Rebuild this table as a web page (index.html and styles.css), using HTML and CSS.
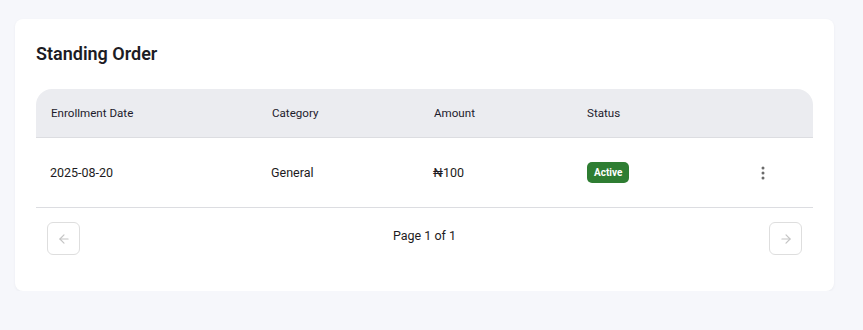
FILE: index.html
```html
<!DOCTYPE html>
<html lang="en">
<head>
<meta charset="utf-8">
<title>Standing Order</title>
<link rel="stylesheet" href="styles.css">
</head>
<body>
<section class="card">
  <h2 class="title">Standing Order</h2>
  <div class="table">
    <div class="row head">
      <div class="cell">Enrollment Date</div>
      <div class="cell">Category</div>
      <div class="cell">Amount</div>
      <div class="cell">Status</div>
      <div class="cell"></div>
    </div>
    <div class="row body">
      <div class="cell">2025-08-20</div>
      <div class="cell">General</div>
      <div class="cell">₦100</div>
      <div class="cell status"><span class="badge">Active</span></div>
      <div class="cell">
        <svg class="kebab" width="4" height="14" viewBox="0 0 4 14"><circle cx="2" cy="2" r="1.5"/><circle cx="2" cy="7" r="1.5"/><circle cx="2" cy="12" r="1.5"/></svg>
      </div>
    </div>
  </div>
  <div class="pager">
    <button class="pbtn" aria-label="Previous">
      <svg width="14" height="14" viewBox="0 0 24 24" fill="none" stroke="currentColor" stroke-width="2" stroke-linecap="round" stroke-linejoin="round"><path d="M19 12H5"/><path d="M12 19l-7-7 7-7"/></svg>
    </button>
    <span class="ptext">Page 1 of 1</span>
    <button class="pbtn" aria-label="Next">
      <svg width="14" height="14" viewBox="0 0 24 24" fill="none" stroke="currentColor" stroke-width="2" stroke-linecap="round" stroke-linejoin="round"><path d="M5 12h14"/><path d="M12 5l7 7-7 7"/></svg>
    </button>
  </div>
</section>
</body>
</html>
```
FILE: styles.css
```css
* { box-sizing: border-box; }
html, body { margin: 0; }
body {
  background: #f6f7fb;
  font-family: Roboto, "Liberation Sans", Arial, sans-serif;
  color: #1d1b22;
  padding: 19px 0 0 15px;
}
.card {
  width: 819px;
  background: #ffffff;
  border-radius: 8px;
  box-shadow: 0 1px 3px rgba(20, 30, 60, 0.05);
  padding: 22px 21px 36px;
}
.title {
  margin: 0 0 23px;
  font-size: 18px;
  line-height: 25px;
  font-weight: 600;
  color: #1c1c24;
}
.table { width: 777px; }
.row {
  display: grid;
  grid-template-columns: 221px 162px 153px 174px 1fr;
  align-items: center;
  border-bottom: 1px solid #dcdde1;
}
.row.head {
  height: 49px;
  background: #ebecf0;
  border-radius: 16px 16px 0 0;
  font-size: 11.6px;
  color: #1d1b2c;
}
.row.body {
  height: 70px;
  font-size: 12.5px;
}
.cell { padding-left: 15px; }
.row.body .cell { padding-left: 14px; }
.row.body .cell.status { padding-left: 15px; }
.badge {
  display: inline-block;
  background: #2e7d32;
  color: #fff;
  font-size: 10px;
  font-weight: 700;
  line-height: 21px;
  height: 21px;
  padding: 0 7px;
  border-radius: 5px;
}
.kebab { display: block; fill: #6b6b6b; margin-left: 1px; }
.pager {
  display: flex;
  align-items: center;
  justify-content: space-between;
  padding: 14px 11px 0;
}
.pbtn {
  width: 33px;
  height: 33px;
  border: 1px solid #dedede;
  border-radius: 6px;
  background: #fff;
  color: #c4c4c4;
  display: flex;
  align-items: center;
  justify-content: center;
  padding: 0;
}
.ptext {
  font-size: 12.5px;
  margin-top: -6px;
  color: #1d1b22;
}
```
